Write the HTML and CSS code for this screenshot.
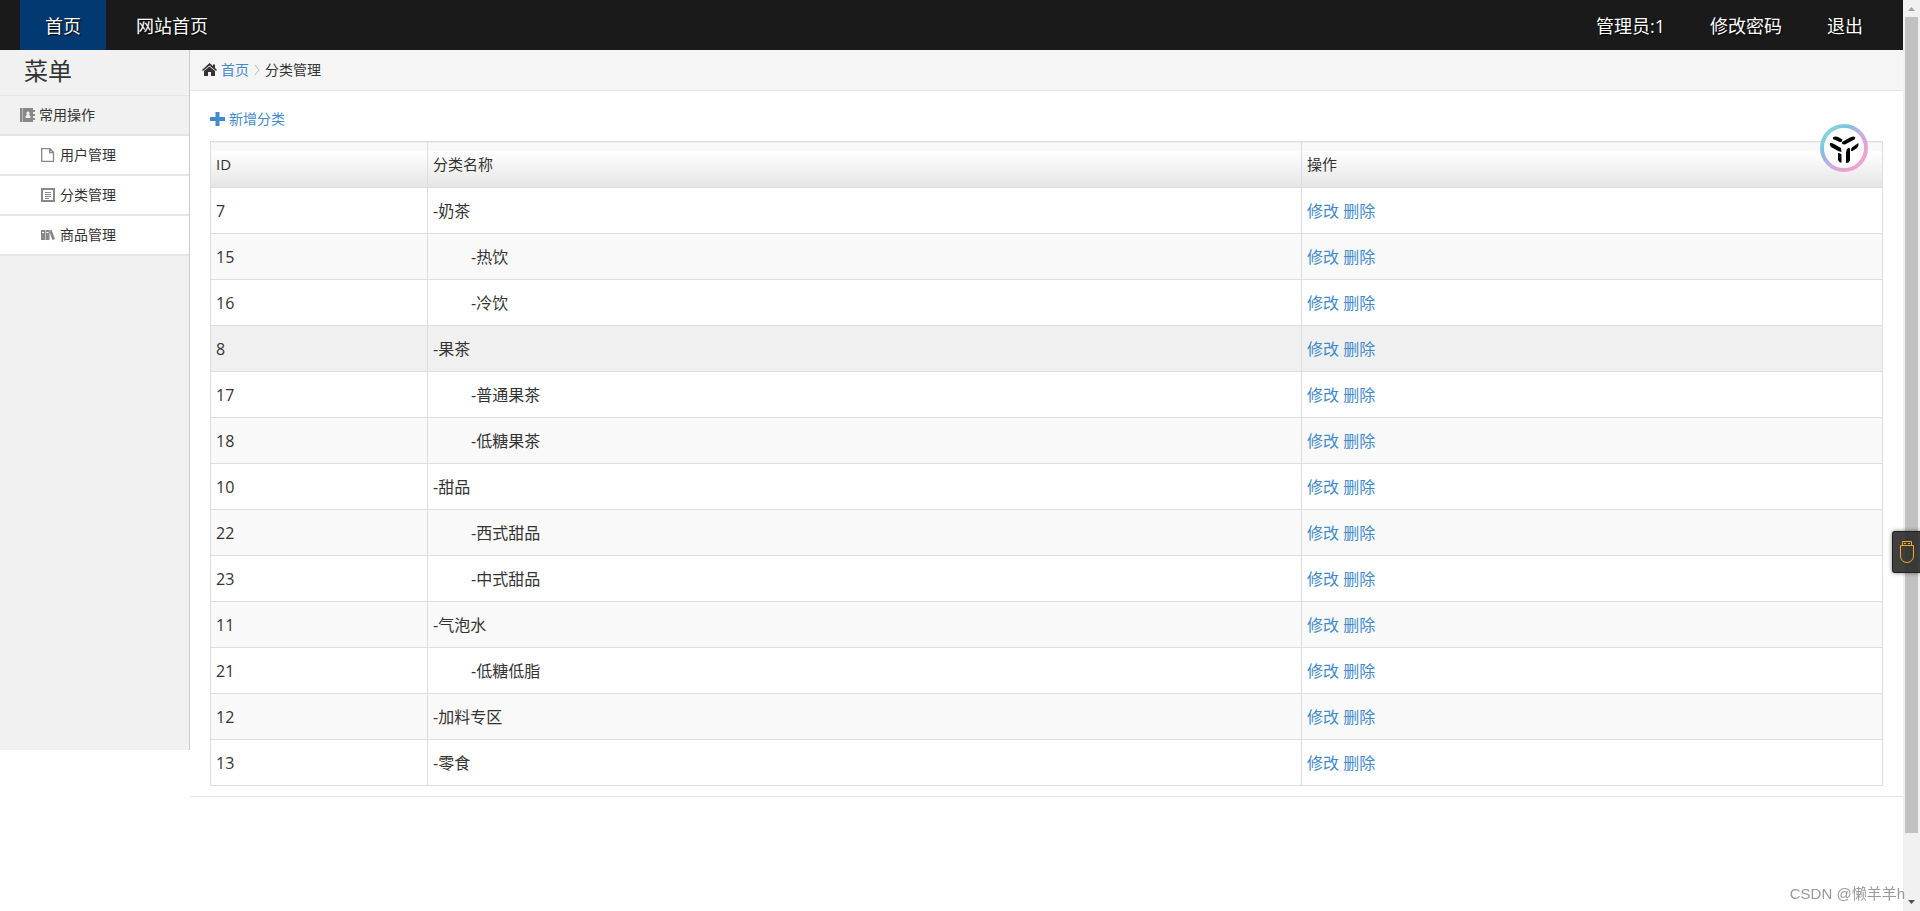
FILE: index.html
```
<!DOCTYPE html>
<html lang="zh-CN">
<head>
<meta charset="utf-8">
<title>分类管理</title>
<link rel="stylesheet" href="styles.css">
</head>
<body>
<div class="shell">
  <div class="page">
    <header class="topbar">
      <nav class="nav">
        <a class="nav-link active" href="#">首页</a>
        <a class="nav-link" href="#">网站首页</a>
      </nav>
      <nav class="nav user-nav">
        <a class="user-link" href="#">管理员:1</a>
        <a class="user-link" href="#">修改密码</a>
        <a class="user-link" href="#">退出</a>
      </nav>
    </header>
    <div class="columns">
      <aside class="sidebar">
        <h1 class="menu-title">菜单</h1>
        <div class="menu-group">
          <svg class="icon" viewBox="0 0 15 14"><path fill="#888" d="M0 0h2v14H0z"/><path fill="#888" fill-rule="evenodd" d="M2.500 0H13v2h2v2h-2v2h2v2h-2v2h2v2h-2v2H2.500zM8 3.500a1.700 1.700 0 0 0-1 3L5.500 8.500V10h5V8.500L9 6.500a1.700 1.700 0 0 0-1-3z"/></svg>
          <span>常用操作</span>
        </div>
        <ul class="menu-list">
          <li><a class="menu-link" href="#"><svg class="icon" viewBox="0 0 15 14"><path fill="none" stroke="#888" stroke-width="1.300" d="M1.700.7h8.300l3.500 3.500v9.100H1.700zM9.700.7v3.800h3.800"/></svg><span>用户管理</span></a></li>
          <li><a class="menu-link" href="#"><svg class="icon" viewBox="0 0 15 14"><path fill="none" stroke="#888" stroke-width="2" d="M2 1h12v12H2z"/><path stroke="#888" d="M5 4.500h6M5 6.500h6M5 8.500h6M5 10.500h4"/></svg><span>分类管理</span></a></li>
          <li><a class="menu-link" href="#"><svg class="icon" viewBox="0 0 15 14"><path fill="#888" fill-rule="evenodd" d="M1 2h4v10H1zM2 4v1h2V4zM5.500 2h4v10h-4zM6.500 4v1h2V4zM9 3l2.500-1.200L15 11l-2.500 1.200z"/></svg><span>商品管理</span></a></li>
        </ul>
      </aside>
      <main class="main">
        <nav class="crumbs">
          <svg class="icon" viewBox="0 0 15 14"><path fill="#333" d="M7.500 0L11 3V1.500h2V5l2 2-1 1-6.500-5.500L1 8 0 7zM2 8l5.500-4.500L13 8v5H9V9H6v4H2z"/></svg>
          <a href="#">首页</a>
          <svg class="chevron" viewBox="0 0 8 12"><path fill="none" stroke="#bbb" d="M2 1l4 5-4 5"/></svg>
          <span>分类管理</span>
        </nav>
        <section class="content">
          <a class="add" href="#"><svg class="icon" viewBox="0 0 15 14"><path fill="#428bca" d="M5.500 0h4v5H15v4H9.500v5h-4V9H0V5h5.500z"/></svg><span>新增分类</span></a>
          <table class="table">
            <colgroup><col class="col-id"><col class="col-name"><col></colgroup>
            <thead><tr><th>ID</th><th>分类名称</th><th>操作</th></tr></thead>
            <tbody>
              <tr><td>7</td><td>-奶茶</td><td><a href="#">修改</a> <a href="#">删除</a></td></tr>
              <tr><td>15</td><td class="child">-热饮</td><td><a href="#">修改</a> <a href="#">删除</a></td></tr>
              <tr><td>16</td><td class="child">-冷饮</td><td><a href="#">修改</a> <a href="#">删除</a></td></tr>
              <tr class="current"><td>8</td><td>-果茶</td><td><a href="#">修改</a> <a href="#">删除</a></td></tr>
              <tr><td>17</td><td class="child">-普通果茶</td><td><a href="#">修改</a> <a href="#">删除</a></td></tr>
              <tr><td>18</td><td class="child">-低糖果茶</td><td><a href="#">修改</a> <a href="#">删除</a></td></tr>
              <tr><td>10</td><td>-甜品</td><td><a href="#">修改</a> <a href="#">删除</a></td></tr>
              <tr><td>22</td><td class="child">-西式甜品</td><td><a href="#">修改</a> <a href="#">删除</a></td></tr>
              <tr><td>23</td><td class="child">-中式甜品</td><td><a href="#">修改</a> <a href="#">删除</a></td></tr>
              <tr><td>11</td><td>-气泡水</td><td><a href="#">修改</a> <a href="#">删除</a></td></tr>
              <tr><td>21</td><td class="child">-低糖低脂</td><td><a href="#">修改</a> <a href="#">删除</a></td></tr>
              <tr><td>12</td><td>-加料专区</td><td><a href="#">修改</a> <a href="#">删除</a></td></tr>
              <tr><td>13</td><td>-零食</td><td><a href="#">修改</a> <a href="#">删除</a></td></tr>
            </tbody>
          </table>
        </section>
      </main>
    </div>
  </div>
  <div class="scrollbar">
    <svg class="arrow" viewBox="0 0 17 17"><path fill="#a3a3a3" d="M5 11h7L8.500 7z"/></svg>
    <div class="track"><div class="thumb"></div></div>
    <svg class="arrow" viewBox="0 0 17 17"><path fill="#505050" d="M5 6h7l-3.500 4z"/></svg>
  </div>
</div>
<svg class="badge" viewBox="0 0 48 48">
  <defs><linearGradient id="ring" x1="0" y1="0" x2="1" y2="1"><stop offset=".15" stop-color="#83d3dc"/><stop offset=".3" stop-color="#80c0df"/><stop offset=".5" stop-color="#bcaee8"/><stop offset=".7" stop-color="#e2a2d8"/><stop offset=".85" stop-color="#f0a3cb"/></linearGradient></defs>
  <circle cx="24" cy="24" r="22" fill="#fff" stroke="url(#ring)" stroke-width="4"/>
  <path fill="#000" d="M13 13.500q2-1.500 5-.5l4.500 2.500-1 2.500h-2l-6.500-3zM22 18l9-5q3-1 4.500.5l-1 2-9.500 5q-3 0-3-1zM10 19q2-.5 4 1l7 4 .5 4q-3-.5-5-2l-5.500-3q-2-2-1-4zM38.500 19q.5 3-1.500 5l-4.500 3H31q-.5-3 1.500-4zM18 29q2-.5 3.500 1.500v8H20q-1.500-1-2-3zM27 25q2-1.500 3-.5v12q-1 2.500-4 2.500V28z"/>
</svg>
<button class="usb" type="button" aria-label="USB">
  <svg viewBox="0 0 14 22" width="14" height="22"><path fill="none" stroke="#f5a623" d="M2.500 4.500v-4h9v4M.5 4.500h13V15a6.500 6.500 0 0 1-13 0zM4 2.500h2M8 2.500h2"/></svg>
</button>
<div class="watermark">CSDN @懒羊羊h</div>
</body>
</html>
```
FILE: styles.css
```
* { box-sizing: border-box; }
body {
  margin: 0;
  color: #333;
  background: #fff;
  font: 16px/20px "Open Sans", "Noto Sans CJK SC", sans-serif;
}
a { color: #428bca; text-decoration: none; }
.shell { display: flex; height: 100vh; overflow: hidden; }
.page { flex: 1; min-width: 0; }

.topbar {
  display: flex;
  justify-content: space-between;
  height: 50px;
  padding: 0 40px 0 20px;
  background: #1a1a1a;
  font-size: 18px;
  line-height: 52px;
}
.nav { display: flex; gap: 5px; }
.user-nav { gap: 45px; }
.nav-link, .user-link { height: 50px; color: #fff; text-shadow: 1px 1px 1px #000; }
.nav-link { padding: 0 25px; }
.nav-link.active { background: #033971; }

.columns { display: flex; align-items: flex-start; }
.sidebar {
  flex: none;
  width: 190px;
  height: 700px;
  border-right: 1px solid #ccc;
  background: #f1f1f1;
  font-size: 14px;
}
.menu-title {
  margin: 0;
  padding: 0 24px;
  height: 46px;
  border-bottom: 1px solid #e5e5e5;
  font-size: 24px;
  font-weight: 400;
  line-height: 42px;
}
.icon { flex: none; width: 15px; height: 14px; }
.menu-group, .menu-link {
  display: flex;
  align-items: center;
  gap: 4px;
  height: 40px;
  border-bottom: 2px solid #e5e5e5;
}
.menu-group { padding-left: 20px; }
.menu-list { margin: 0; padding: 0; list-style: none; }
.menu-link { gap: 5px; padding-left: 40px; background: #fff; color: #333; }

.main { flex: 1; min-width: 0; border-bottom: 1px solid #e5e5e5; }
.crumbs {
  display: flex;
  align-items: center;
  gap: 4px;
  height: 41px;
  padding-left: 12px;
  border-bottom: 1px solid #e5e5e5;
  background: #f5f5f5;
  font-size: 14px;
}
.chevron { width: 8px; height: 12px; }
.content { padding: 18px 20px 10px; }
.add {
  display: flex;
  align-items: center;
  gap: 4px;
  width: max-content;
  margin-bottom: 12px;
  font-size: 14px;
}
.table {
  width: 100%;
  border-collapse: collapse;
  table-layout: fixed;
}
.col-id { width: 217px; }
.col-name { width: 874px; }
.table th, .table td {
  height: 46px;
  padding: 0 5px;
  border: 1px solid #ddd;
  text-align: left;
}
.table th {
  padding-bottom: 2px;
  background: linear-gradient(#f8f8f8 9px, #fff 9px, #e5e5e5);
  font-size: 15px;
  font-weight: 400;
}
.table tbody tr:nth-child(even) { background: #f9f9f9; }
.table tbody tr.current { background: #f0f0f0; }
.table .child { padding-left: 43px; }

.scrollbar {
  display: flex;
  flex-direction: column;
  flex: none;
  width: 17px;
  background: #f1f1f1;
}
.arrow { width: 17px; height: 17px; }
.track { flex: 1; padding: 0 2px; }
.thumb { height: 93%; background: #c1c1c1; }

.badge { position: absolute; top: 124px; right: 52px; width: 48px; height: 48px; }
.usb {
  position: fixed;
  top: 531px;
  right: 0;
  display: flex;
  align-items: center;
  width: 28px;
  height: 42px;
  padding: 0 0 0 7px;
  border: 1px solid #222;
  border-right: 0;
  border-radius: 3px 0 0 3px;
  background: rgba(42, 42, 42, .9);
  box-shadow: 0 0 4px rgba(0, 0, 0, .5);
}
.watermark {
  position: fixed;
  right: 15px;
  bottom: 7px;
  color: #999;
  font-family: "Liberation Sans", "Noto Sans CJK SC", sans-serif;
  font-size: 15px;
}
```
